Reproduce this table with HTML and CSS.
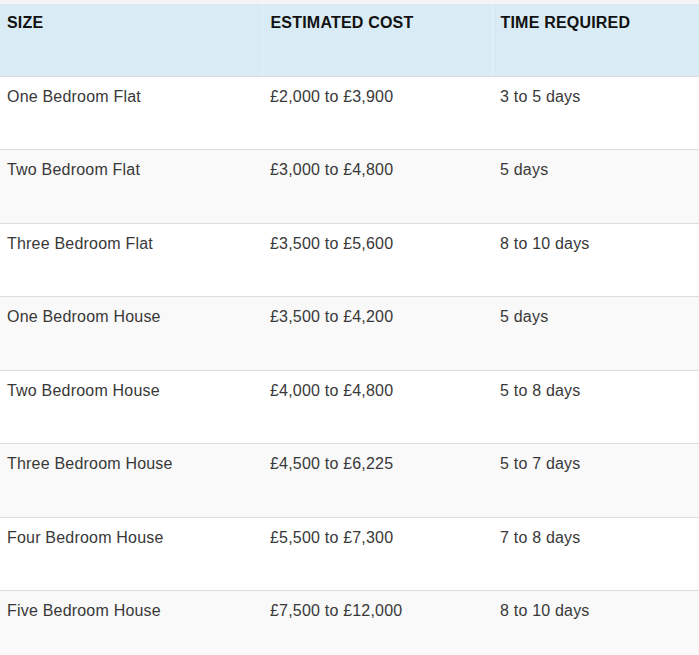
FILE: index.html
```html
<!DOCTYPE html>
<html lang="en">
<head>
<meta charset="utf-8">
<title>Removal costs</title>
<link rel="stylesheet" href="styles.css">
</head>
<body>
<div class="topstrip"></div>
<table class="costs">
  <colgroup>
    <col class="c1"><col class="c2"><col class="c3">
  </colgroup>
  <thead>
    <tr><th>SIZE</th><th>ESTIMATED COST</th><th>TIME REQUIRED</th></tr>
  </thead>
  <tbody>
    <tr><td>One Bedroom Flat</td><td>£2,000 to £3,900</td><td>3 to 5 days</td></tr>
    <tr><td>Two Bedroom Flat</td><td>£3,000 to £4,800</td><td>5 days</td></tr>
    <tr><td>Three Bedroom Flat</td><td>£3,500 to £5,600</td><td>8 to 10 days</td></tr>
    <tr><td>One Bedroom House</td><td>£3,500 to £4,200</td><td>5 days</td></tr>
    <tr><td>Two Bedroom House</td><td>£4,000 to £4,800</td><td>5 to 8 days</td></tr>
    <tr><td>Three Bedroom House</td><td>£4,500 to £6,225</td><td>5 to 7 days</td></tr>
    <tr><td>Four Bedroom House</td><td>£5,500 to £7,300</td><td>7 to 8 days</td></tr>
    <tr><td>Five Bedroom House</td><td>£7,500 to £12,000</td><td>8 to 10 days</td></tr>
  </tbody>
</table>
</body>
</html>
```

FILE: styles.css
```css
html, body {
  margin: 0;
  padding: 0;
  background: #ffffff;
}
body {
  font-family: "Liberation Sans", Arial, sans-serif;
  font-size: 16px;
  letter-spacing: 0.2px;
  overflow: hidden;
}
.topstrip {
  height: 4px;
  background: #f4f4f4;
}
.costs {
  width: 699px;
  border-collapse: collapse;
  table-layout: fixed;
}
.c1 { width: 262px; }
.c2 { width: 230px; }
.c3 { width: 207px; }
.costs th {
  background: #d9ecf5;
  color: #111111;
  font-weight: bold;
  text-align: left;
  vertical-align: top;
  line-height: 24px;
  height: 72px;
  box-sizing: border-box;
  padding: 7px 8px 0 8px;
  border-bottom: 1px solid #dcdcdc;
  border-left: 1px solid #e4f2f9;
}
.costs th:first-child {
  border-left: none;
  padding-left: 7px;
}
.costs td {
  color: #383838;
  vertical-align: top;
  line-height: 24px;
  height: 73.5px;
  box-sizing: border-box;
  padding: 8px 8px 0 8px;
  border-bottom: 1px solid #dddddd;
}
.costs td:first-child {
  padding-left: 7px;
}
.costs tbody tr:nth-child(even) td {
  background: #f9f9f9;
}
.costs tbody tr:last-child td {
  border-bottom: none;
}
```
